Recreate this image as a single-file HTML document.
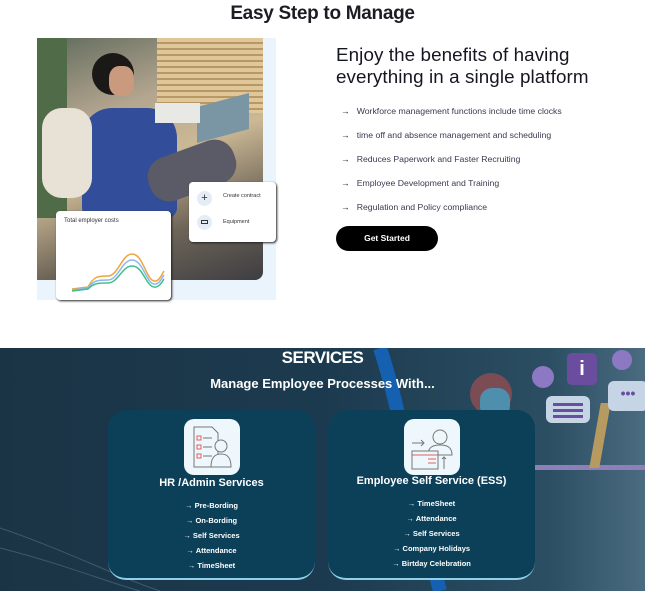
<!DOCTYPE html>
<html><head><meta charset="utf-8"><style>
*{margin:0;padding:0;box-sizing:border-box}
body{width:645px;height:591px;overflow:hidden;background:#fff;font-family:"Liberation Sans",sans-serif;position:relative}
.abs{position:absolute}
h1{position:absolute;left:0;width:645px;top:3px;text-align:center;font-size:19px;font-weight:bold;color:#1c1c24;letter-spacing:-0.3px}
.h2{left:336px;top:44px;font-size:18.8px;line-height:22px;color:#161622;letter-spacing:0.1px}
.li{left:341px;font-size:8.7px;color:#3a3a52}
.li b{font-weight:normal;margin-right:7px;color:#222}
.btn{left:336px;top:226px;width:102px;height:25px;border-radius:13px;background:#000;color:#fff;font-size:8.5px;font-weight:bold;text-align:center;line-height:25px}
.dark{left:0;top:348px;width:645px;height:243px;background:linear-gradient(90deg,#1b3445 0%,#1c3a4f 50%,#2c4e62 85%,#4b6c80 100%);overflow:hidden}
.card{position:absolute;top:62px;width:207px;height:170px;border-radius:18px;background:#0c3f58;border-bottom:2px solid #8fd0ea;color:#fff;text-align:center}
.ic{position:absolute;top:9px;width:56px;height:56px;border-radius:10px;background:#eef7fb}
.ct{position:absolute;left:0;width:100%;font-size:11px;font-weight:bold}
.it{position:absolute;left:0;width:100%;font-size:7.5px;font-weight:bold}
.card1{left:108px}.card2{left:328px}
.card1 .ic{left:76px}.card2 .ic{left:76px}
</style></head><body>
<h1>Easy Step to Manage</h1>
<div class="abs" style="left:37px;top:38px;width:239px;height:262px;background:#eaf4fd"></div>
<div class="abs" style="left:37px;top:38px;width:226px;height:242px;border-radius:0 0 8px 0;background:linear-gradient(160deg,#5f6a5c 0%,#b3a58f 30%,#cbb894 50%,#6e6558 75%,#3d3d42 100%);overflow:hidden">
 <div class="abs" style="left:120px;top:0;width:106px;height:75px;background:repeating-linear-gradient(180deg,#e0c79a 0 4px,#b99868 4px 6px)"></div>
 <div class="abs" style="left:0;top:0;width:30px;height:180px;background:#4f6b48"></div>
 <div class="abs" style="left:55px;top:15px;width:42px;height:42px;border-radius:50%;background:#1b1818"></div>
 <div class="abs" style="left:72px;top:28px;width:25px;height:30px;border-radius:40%;background:#c99a7d"></div>
 <div class="abs" style="left:45px;top:70px;width:95px;height:110px;border-radius:30px 30px 10px 10px;background:#324e9a"></div>
 <div class="abs" style="left:5px;top:70px;width:50px;height:90px;border-radius:20px;background:#e8e2d6"></div>
 <div class="abs" style="left:110px;top:110px;width:90px;height:45px;border-radius:20px;background:#5a5b66;transform:rotate(-20deg)"></div>
 <div class="abs" style="left:160px;top:62px;width:52px;height:36px;background:#7a95a4;transform:skewY(-15deg)"></div>
 <div class="abs" style="left:118px;top:65px;width:45px;height:20px;background:#e8e8e4"></div>
</div>
<div class="abs" style="left:189px;top:182px;width:87px;height:60px;background:#fff;border-radius:4px;box-shadow:1px 1px 2px #222">
 <div class="abs" style="left:8px;top:9px;width:15px;height:15px;border-radius:50%;background:#e4ecf6;font-size:11px;line-height:14px;text-align:center;color:#333">+</div>
 <div class="abs" style="left:34px;top:11px;font-size:5.5px;color:#333">Create contract</div>
 <div class="abs" style="left:8px;top:33px;width:15px;height:15px;border-radius:50%;background:#e4ecf6"></div>
 <div class="abs" style="left:12px;top:38px;width:7px;height:4px;border:1px solid #333"></div>
 <div class="abs" style="left:34px;top:37px;font-size:5.5px;color:#333">Equipment</div>
</div>
<div class="abs" style="left:56px;top:211px;width:115px;height:89px;background:#fff;border-radius:4px;box-shadow:1px 1px 2px #222">
 <div class="abs" style="left:8px;top:7px;font-size:6px;color:#333">Total employer costs</div>
 <svg class="abs" style="left:10px;top:25px" width="100" height="60"><path d="M6 53 L22 51 C28 40 32 40 42 40 C52 40 56 18 66 18 C78 18 80 47 90 45 C94 44 96 38 98 35" fill="none" stroke="#f0a43a" stroke-width="1.5"/><path d="M6 54 L22 52 C28 44 32 44 42 44 C52 44 56 24 66 24 C78 24 80 50 90 48 C94 47 96 42 98 39" fill="none" stroke="#8cb8ee" stroke-width="1.5"/><path d="M6 55 L22 53 C28 47 32 47 42 47 C52 47 56 30 66 30 C78 30 80 53 90 51 C94 50 96 46 98 43" fill="none" stroke="#3fbf8c" stroke-width="1.5"/></svg>
</div>
<div class="abs h2">Enjoy the benefits of having<br>everything in a single platform</div>
<div class="abs li" style="top:106px"><b>→</b>Workforce management functions include time clocks</div>
<div class="abs li" style="top:130px"><b>→</b>time off and absence management and scheduling</div>
<div class="abs li" style="top:154px"><b>→</b>Reduces Paperwork and Faster Recruiting</div>
<div class="abs li" style="top:178px"><b>→</b>Employee Development and Training</div>
<div class="abs li" style="top:202px"><b>→</b>Regulation and Policy compliance</div>
<div class="abs btn">Get Started</div>
<div class="abs dark">
 <svg class="abs" style="left:0;top:0" width="645" height="243"><path d="M380 0 C400 60 415 150 440 243" stroke="#1560b0" stroke-width="14" fill="none"/><path d="M0 180 C60 200 120 230 160 243" stroke="#3d5a6c" stroke-width="1" fill="none"/><path d="M0 200 C60 215 110 235 140 243" stroke="#3d5a6c" stroke-width="1" fill="none"/></svg>
 <div class="abs" style="left:470px;top:25px;width:42px;height:42px;border-radius:50%;background:#7c4c55"></div>
 <div class="abs" style="left:480px;top:40px;width:30px;height:30px;border-radius:40%;background:#4e8fad"></div>
 <div class="abs" style="left:470px;top:75px;width:60px;height:110px;border-radius:20px 20px 0 0;background:#1d5f86"></div>
 <div class="abs" style="left:520px;top:117px;width:125px;height:5px;background:#8f7fb8"></div>
 <div class="abs" style="left:595px;top:55px;width:10px;height:65px;background:#b79a60;transform:skewX(-10deg)"></div>
 <div class="abs" style="left:567px;top:5px;width:30px;height:32px;border-radius:5px;background:#6b4da0;color:#fff;font-weight:bold;font-size:20px;text-align:center;line-height:32px">i</div>
 <div class="abs" style="left:532px;top:18px;width:22px;height:22px;border-radius:50%;background:#8d79c3"></div>
 <div class="abs" style="left:612px;top:2px;width:20px;height:20px;border-radius:50%;background:#8d79c3"></div>
 <div class="abs" style="left:546px;top:48px;width:44px;height:27px;border-radius:6px;background:#c6d5e6"></div>
 <div class="abs" style="left:553px;top:55px;width:30px;height:3px;background:#6b4da0;box-shadow:0 6px 0 #6b4da0,0 12px 0 #6b4da0"></div>
 <div class="abs" style="left:608px;top:33px;width:40px;height:30px;border-radius:6px;background:#c6d5e6;color:#6b4da0;font-weight:bold;font-size:14px;text-align:center;line-height:24px">•••</div>
 <div class="abs" style="left:0;top:0;width:645px;text-align:center;color:#fff;font-weight:bold;font-size:17px;top:0;letter-spacing:-0.5px">SERVICES</div>
 <div class="abs" style="left:0;top:28px;width:645px;text-align:center;color:#fff;font-weight:bold;font-size:13px">Manage Employee Processes With...</div>
 <div class="card card1">
  <div class="ic"><svg width="56" height="56"><path d="M10 8h18l6 6v34H10z" fill="none" stroke="#777" stroke-width="1"/><rect x="13" y="17" width="4" height="4" fill="none" stroke="#e06060"/><rect x="13" y="26" width="4" height="4" fill="none" stroke="#e06060"/><rect x="13" y="35" width="4" height="4" fill="none" stroke="#e06060"/><path d="M19 19h9M19 28h9M19 37h9" stroke="#777"/><circle cx="37" cy="27" r="6" fill="#eef7fb" stroke="#777"/><path d="M27 48c0-10 4-13 10-13s10 3 10 13z" fill="#eef7fb" stroke="#777"/></svg></div>
  <div class="ct" style="top:67px">HR /Admin Services</div>
  <div class="it" style="top:91px">→ Pre-Bording</div>
  <div class="it" style="top:106px">→ On-Bording</div>
  <div class="it" style="top:121px">→ Self Services</div>
  <div class="it" style="top:136px">→ Attendance</div>
  <div class="it" style="top:151px">→ TimeSheet</div>
 </div>
 <div class="card card2">
  <div class="ic"><svg width="56" height="56"><path d="M8 24h12M17 21l3 3-3 3" stroke="#777" fill="none"/><circle cx="36" cy="18" r="7" fill="none" stroke="#777"/><path d="M24 36c0-8 5-10 12-10s12 2 12 10z" fill="none" stroke="#777"/><rect x="8" y="32" width="26" height="18" fill="#eef7fb" stroke="#777"/><path d="M8 36h26" stroke="#e06060"/><path d="M24 40h8M24 44h8" stroke="#e06060"/><path d="M40 50V38M38 40l2-2 2 2" stroke="#777" fill="none"/></svg></div>
  <div class="ct" style="top:65px">Employee Self Service (ESS)</div>
  <div class="it" style="top:89px">→ TimeSheet</div>
  <div class="it" style="top:104px">→ Attendance</div>
  <div class="it" style="top:119px">→ Self Services</div>
  <div class="it" style="top:134px">→ Company Holidays</div>
  <div class="it" style="top:149px">→ Birtday Celebration</div>
 </div>
</div>
</body></html>
